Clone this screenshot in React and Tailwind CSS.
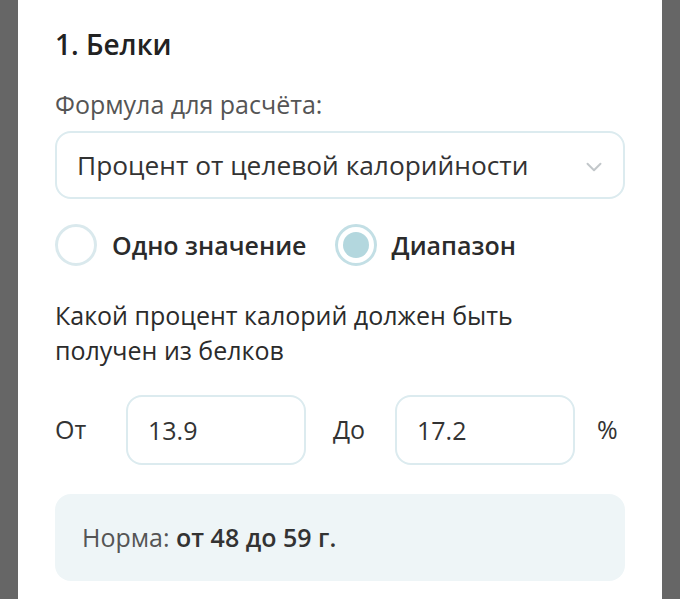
import React, { useState } from 'react';

function Radio({ checked, label, onClick }) {
    return (
        <button type="button" onClick={onClick} className="flex items-center gap-[15px]">
            <span
                className={`flex h-[42px] w-[42px] items-center justify-center rounded-full border-[3px] ${
                    checked ? 'border-[#c3dfe5]' : 'border-[#dae9ed]'
                }`}
            >
                {checked && <span className="h-[26px] w-[26px] rounded-full bg-[#b3d7de]" />}
            </span>
            <span className="text-[25px] font-semibold leading-[34px] text-[#2b2b2b]">{label}</span>
        </button>
    );
}

export default function App() {
    const [mode, setMode] = useState('range');
    const [from, setFrom] = useState('13.9');
    const [to, setTo] = useState('17.2');

    return (
        <div className="flex min-h-[599px] justify-center bg-[#666666] font-['Open_Sans',sans-serif]">
            <div className="w-[644px] bg-white px-[37px] pt-[27px]">
                <h2 className="text-[28px] font-semibold leading-[34px] text-[#222]">1. Белки</h2>

                {/* Формула */}
                <div className="mt-[26px] text-[25px] leading-[34px] text-[#555]">Формула для расчёта:</div>
                <div className="mt-[10px] flex h-[68px] items-center justify-between rounded-[16px] border-2 border-[#dcebef] pl-[20px] pr-[16px]">
                    <span className="text-[26.3px] font-medium leading-[34px] text-[#333]">Процент от целевой калорийности</span>
                    <svg width="26" height="26" viewBox="0 0 24 24" fill="none" stroke="#c2c7ca" strokeWidth="1.8" strokeLinecap="round" strokeLinejoin="round" className="mt-[4px]">
                        <path d="M6 9l6 6 6-6" />
                    </svg>
                </div>

                <div className="mt-[25px] flex items-center gap-[28px]">
                    <Radio checked={mode === 'single'} label="Одно значение" onClick={() => setMode('single')} />
                    <Radio checked={mode === 'range'} label="Диапазон" onClick={() => setMode('range')} />
                </div>

                <p className="mt-[32px] text-[25px] leading-[35px] text-[#2b2b2b]">
                    Какой процент калорий должен быть
                    <br />
                    получен из белков
                </p>

                <div className="mt-[27px] flex items-center text-[25px] text-[#333]">
                    <span className="w-[71px]">От</span>
                    <input
                        value={from}
                        onChange={(e) => setFrom(e.target.value)}
                        className="h-[70px] w-[180px] rounded-[16px] border-2 border-[#dcebef] px-[20px] text-[25px] text-[#333] outline-none"
                    />
                    <span className="ml-[27px] w-[62px]">До</span>
                    <input
                        value={to}
                        onChange={(e) => setTo(e.target.value)}
                        className="h-[70px] w-[180px] rounded-[16px] border-2 border-[#dcebef] px-[20px] text-[25px] text-[#333] outline-none"
                    />
                    <span className="ml-[22px]">%</span>
                </div>

                <div className="mt-[29px] flex h-[87px] items-center rounded-[16px] bg-[#eef5f7] px-[27px] text-[25px] text-[#555]">
                    Норма:&nbsp;<span className="font-semibold text-[#333]">от 48 до 59 г.</span>
                </div>
            </div>
        </div>
    );
}
